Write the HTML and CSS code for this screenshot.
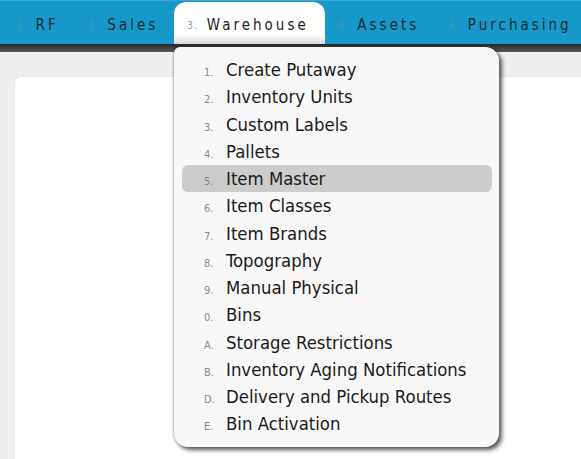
FILE: index.html
```html
<!DOCTYPE html>
<html lang="en">
<head>
  <meta charset="UTF-8" />
  <title>Warehouse Menu</title>
  <link rel="stylesheet" href="styles.css">
</head>
<body>
  <nav class="topbar">
    <div class="tab"><span class="num">1.</span>RF</div>
    <div class="tab"><span class="num">2.</span>Sales</div>
    <div class="tab active"><span class="num">3.</span>Warehouse</div>
    <div class="tab"><span class="num">4.</span>Assets</div>
    <div class="tab"><span class="num">5.</span>Purchasing</div>
  </nav>
  <div class="band"></div>

  <main class="page">
    <div class="card"></div>
  </main>

  <ul class="dropdown">
    <li><span class="num">1.</span>Create Putaway</li>
    <li><span class="num">2.</span>Inventory Units</li>
    <li><span class="num">3.</span>Custom Labels</li>
    <li><span class="num">4.</span>Pallets</li>
    <li class="hover"><span class="num">5.</span>Item Master</li>
    <li><span class="num">6.</span>Item Classes</li>
    <li><span class="num">7.</span>Item Brands</li>
    <li><span class="num">8.</span>Topography</li>
    <li><span class="num">9.</span>Manual Physical</li>
    <li><span class="num">0.</span>Bins</li>
    <li><span class="num">A.</span>Storage Restrictions</li>
    <li><span class="num">B.</span>Inventory Aging Notifications</li>
    <li><span class="num">D.</span>Delivery and Pickup Routes</li>
    <li><span class="num">E.</span>Bin Activation</li>
  </ul>
</body>
</html>
```

FILE: styles.css
```css
html, body {
  margin: 0;
  padding: 0;
  height: 100%;
  overflow: hidden;
}

body {
  font-family: "DejaVu Sans Condensed", "DejaVu Sans", sans-serif;
  background: #efefef;
  color: #1a1a1a;
}

.topbar {
  display: flex;
  height: 44px;
  background: #1699c8;
  border-top: 1px solid #3fa6cc;
  box-sizing: border-box;
  padding-left: 3px;
}

.tab {
  display: flex;
  align-items: center;
  padding: 4px 16px 0 13px;
  font-size: 15px;
  letter-spacing: 3px;
  color: #1d2a33;
}

.tab .num {
  font-size: 10px;
  letter-spacing: 1px;
  color: #5f8fa6;
  margin-right: 9px;
  margin-top: 2px;
}

.tab.active {
  margin-top: 1px;
  padding-top: 3px;
  background: linear-gradient(#ffffff 78%, #d9d9d9);
  border-radius: 12px 12px 0 0;
  color: #222;
}

.tab.active .num {
  color: #999;
}

.band {
  height: 8px;
  background: linear-gradient(#25272b, #55585d);
}

.page {
  padding: 25px 0 0 15px;
}

.card {
  height: 400px;
  background: #fff;
  border-radius: 6px 0 0 0;
  box-shadow: 0 0 2px rgba(0, 0, 0, 0.08);
}

.dropdown {
  position: absolute;
  top: 47px;
  left: 174px;
  width: 325px;
  box-sizing: border-box;
  margin: 0;
  padding: 9px 7px 9px 8px;
  list-style: none;
  background: #f8f8f8;
  border-radius: 6px 14px 14px 14px;
  box-shadow: 3px 3px 4px rgba(0, 0, 0, 0.65), -1px 0 2px rgba(0, 0, 0, 0.25);
}

.dropdown li {
  height: 27.25px;
  line-height: 27.25px;
  padding-left: 22px;
  font-size: 18.4px;
  border-radius: 6px;
  white-space: nowrap;
}

.dropdown li.hover {
  background: #cccccc;
}

.dropdown .num {
  display: inline-block;
  width: 22px;
  font-size: 11px;
  color: #8a8a8a;
}
```
